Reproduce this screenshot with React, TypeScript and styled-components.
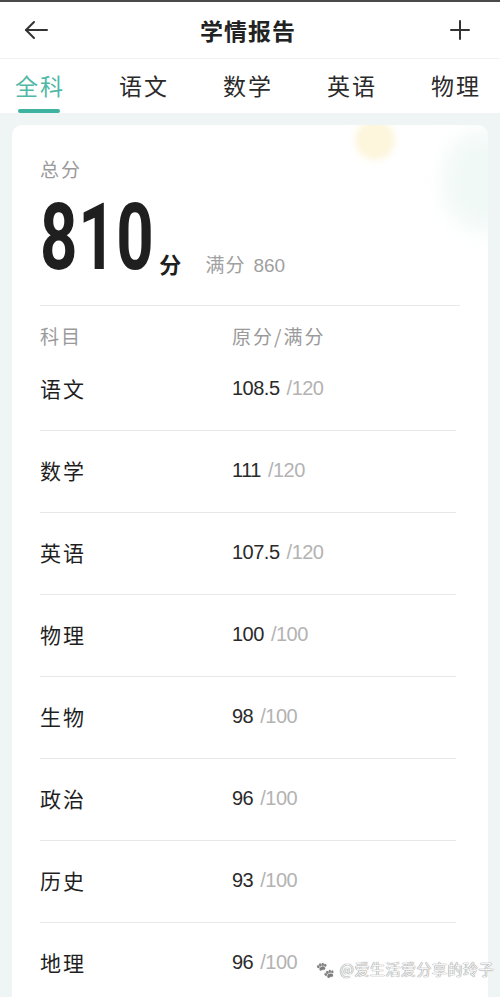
import styled, { createGlobalStyle } from "styled-components"

const GlobalStyle = createGlobalStyle`
  html, body {
    margin: 0;
    padding: 0;
    background: #eef5f4;
  }
  body {
    font-family: "Noto Sans CJK SC", "Noto Sans", sans-serif;
    color: #222;
  }
`

const Page = styled.div`
  width: 500px;
  height: 997px;
  overflow: hidden;
  background: #eef5f4;
  border-top: 2px solid #4a4a4a;
  box-sizing: border-box;
  position: relative;
`

const TopBar = styled.div`
  height: 56px;
  background: #fff;
  display: flex;
  align-items: center;
  justify-content: space-between;
  padding: 0 26px 0 22px;
  border-bottom: 1px solid #f1f3f3;
`

const Title = styled.div`
  font-size: 23px;
  font-weight: 700;
  color: #222;
  letter-spacing: 1px;
`

const IconBtn = styled.div`
  width: 28px;
  height: 28px;
  display: flex;
  align-items: center;
  justify-content: center;
  color: #333;
`

const Tabs = styled.div`
  height: 54px;
  background: #fff;
  display: flex;
  justify-content: space-between;
  align-items: flex-start;
  padding: 0 19px 0 15px;
`

const Tab = styled.div<{ $active?: boolean }>`
  position: relative;
  font-size: 23px;
  line-height: 28px;
  padding-top: 12px;
  height: 42px;
  color: ${(p) => (p.$active ? "#4fb9a5" : "#2a2a2a")};
  letter-spacing: 2px;

  &::after {
    content: "";
    display: ${(p) => (p.$active ? "block" : "none")};
    position: absolute;
    left: 3px;
    right: 5px;
    bottom: 0;
    height: 4px;
    border-radius: 2px;
    background: #3db39f;
  }
`

const Body = styled.div`
  padding: 12px 12px 0 12px;
`

const Card = styled.div`
  position: relative;
  background: #fff;
  border-radius: 10px 10px 0 0;
  padding: 32px 28px 0 28px;
  height: 900px;
  overflow: hidden;
`

const Sun = styled.div`
  position: absolute;
  left: 343px;
  top: -5px;
  width: 40px;
  height: 40px;
  border-radius: 50%;
  background: #fdf5dc;
  filter: blur(3px);
`

const Glow = styled.div`
  position: absolute;
  right: -34px;
  top: 6px;
  width: 80px;
  height: 100px;
  border-radius: 50%;
  background: #f1f9f7;
  filter: blur(10px);
`

const Label = styled.div`
  font-size: 19px;
  color: #9a9a9a;
  line-height: 24px;
  letter-spacing: 2px;
`

const TotalRow = styled.div`
  display: flex;
  align-items: flex-end;
  height: 125px;
  padding-bottom: 27px;
  box-sizing: border-box;
  border-bottom: 1px solid #e8e8e8;
`

const BigNum = styled.span`
  display: inline-block;
  font-family: Roboto, "Liberation Sans", sans-serif;
  font-weight: 700;
  font-size: 92px;
  line-height: 80px;
  color: #1f1f1f;
  transform: scaleX(0.71);
  transform-origin: left bottom;
  margin-right: -46px;
  letter-spacing: 1px;
`

const Unit = styled.span`
  font-size: 22px;
  font-weight: 700;
  color: #1f1f1f;
  line-height: 24px;
  margin-left: 4px;
  margin-bottom: 3px;
`

const FullMark = styled.span`
  font-size: 19px;
  color: #a0a0a0;
  line-height: 24px;
  margin-left: 24px;
  margin-bottom: 0px;
  letter-spacing: 1px;

  & b {
    font-weight: 400;
    font-family: "Liberation Sans", sans-serif;
    margin-left: 8px;
    letter-spacing: 0;
  }
`

const TableHead = styled.div`
  display: grid;
  grid-template-columns: 192px 1fr;
  height: 43px;
  padding-top: 18px;
  box-sizing: border-box;
  margin-right: 4px;
`

const Row = styled.div<{ $last?: boolean }>`
  display: grid;
  grid-template-columns: 192px 1fr;
  height: 82px;
  padding-top: 27px;
  box-sizing: border-box;
  border-bottom: ${(p) => (p.$last ? "none" : "1px solid #e8e8e8")};
  margin-right: 4px;
`

const Subject = styled.div`
  font-size: 21px;
  line-height: 24px;
  color: #1f1f1f;
  letter-spacing: 2px;
`

const Score = styled.div`
  font-family: "Liberation Sans", Roboto, sans-serif;
  font-size: 20px;
  line-height: 24px;
  color: #2a2a2a;
  letter-spacing: -0.5px;

  & span {
    color: #b3b3b3;
    margin-left: 7px;
  }
`

const Watermark = styled.div`
  position: absolute;
  right: 6px;
  bottom: 18px;
  font-size: 15px;
  color: #f4f4f4;
  text-shadow: 0 0 1px #888, 0 0 1px #888;
  letter-spacing: 0.5px;

  & i {
    font-style: normal;
    filter: grayscale(1) brightness(1.3);
    margin-right: 4px;
  }
`

const tabs = ["全科", "语文", "数学", "英语", "物理"]

const scores = [
  { name: "语文", got: "108.5", full: "120" },
  { name: "数学", got: "111", full: "120" },
  { name: "英语", got: "107.5", full: "120" },
  { name: "物理", got: "100", full: "100" },
  { name: "生物", got: "98", full: "100" },
  { name: "政治", got: "96", full: "100" },
  { name: "历史", got: "93", full: "100" },
  { name: "地理", got: "96", full: "100" },
]

export default function App() {
  return (
    <>
      <GlobalStyle />
      <Page>
        <TopBar>
          <IconBtn>
            <svg width="26" height="26" viewBox="0 0 26 26" fill="none" stroke="#333" strokeWidth="2" strokeLinecap="round" strokeLinejoin="round">
              <path d="M24 13H3" />
              <path d="M11 5L3 13l8 8" />
            </svg>
          </IconBtn>
          <Title>学情报告</Title>
          <IconBtn>
            <svg width="22" height="22" viewBox="0 0 22 22" fill="none" stroke="#333" strokeWidth="2" strokeLinecap="round">
              <path d="M11 2v18M2 11h18" />
            </svg>
          </IconBtn>
        </TopBar>
        <Tabs>
          {tabs.map((t, i) => (
            <Tab key={t} $active={i === 0}>{t}</Tab>
          ))}
        </Tabs>
        <Body>
          <Card>
            <Sun />
            <Glow />
            <Label>总分</Label>
            <TotalRow>
              <BigNum>810</BigNum>
              <Unit>分</Unit>
              <FullMark>满分<b>860</b></FullMark>
            </TotalRow>
            <TableHead>
              <Label>科目</Label>
              <Label>原分/满分</Label>
            </TableHead>
            {scores.map((s, i) => (
              <Row key={s.name} $last={i === scores.length - 1}>
                <Subject>{s.name}</Subject>
                <Score>
                  {s.got}
                  <span>/{s.full}</span>
                </Score>
              </Row>
            ))}
          </Card>
        </Body>
        <Watermark><i>🐾</i>@爱生活爱分享的玲子</Watermark>
      </Page>
    </>
  )
}
